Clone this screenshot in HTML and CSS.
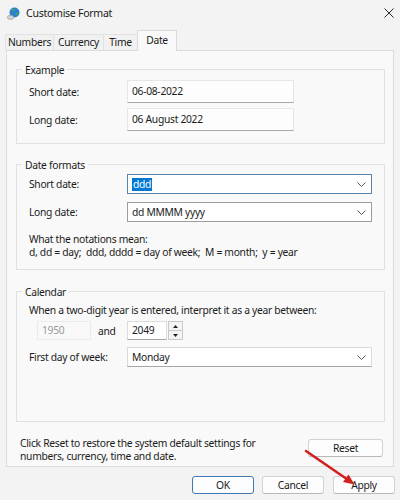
FILE: index.html
```html
<!DOCTYPE html>
<html>
<head>
<meta charset="utf-8">
<link rel="stylesheet" href="styles.css">
</head>
<body>
<div class="window">
  <div class="titlebar">
    <svg class="appicon" width="13" height="13" viewBox="0 0 13 13">
      <circle cx="7.5" cy="5.5" r="5" fill="#2c7fd3"/>
      <path d="M4.5 2.3 Q6.8 1.2 8 2.6 Q7.3 4.3 5.3 4 Z M8.5 5.5 Q10.8 5.4 11.3 7.2 Q10 8.8 8.6 7.8 Z" fill="#3fae3f"/>
      <ellipse cx="3.6" cy="10.3" rx="3.2" ry="2.1" fill="#d4d4d4" stroke="#8c8c8c" stroke-width="0.6"/>
    </svg>
    <span class="title">Customise Format</span>
    <svg class="close" width="10" height="10" viewBox="0 0 10 10">
      <path d="M0.5 0.5 L9.5 9.5 M9.5 0.5 L0.5 9.5" stroke="#2b2b2b" stroke-width="1"/>
    </svg>
  </div>
  <div class="tabs">
    <div class="tab t-num">Numbers</div>
    <div class="tab t-cur">Currency</div>
    <div class="tab t-time">Time</div>
    <div class="tab t-date active">Date</div>
  </div>
  <div class="panel">
    <div class="group g-example">
      <div class="legend">Example</div>
      <div class="row first">
        <span class="label">Short date:</span>
        <div class="field">06-08-2022</div>
      </div>
      <div class="row second">
        <span class="label">Long date:</span>
        <div class="field">06 August 2022</div>
      </div>
    </div>

    <div class="group g-formats">
      <div class="legend">Date formats</div>
      <div class="row c-first">
        <span class="label">Short date:</span>
        <div class="combo focused"><span class="sel">ddd</span>
          <svg class="chev" width="9" height="5" viewBox="0 0 9 5"><path d="M0.5 0.5 L4.5 4.5 L8.5 0.5" fill="none" stroke="#555" stroke-width="1"/></svg>
        </div>
      </div>
      <div class="row c-second">
        <span class="label">Long date:</span>
        <div class="combo">dd MMMM yyyy
          <svg class="chev" width="9" height="5" viewBox="0 0 9 5"><path d="M0.5 0.5 L4.5 4.5 L8.5 0.5" fill="none" stroke="#555" stroke-width="1"/></svg>
        </div>
      </div>
      <div class="notes">
        <div>What the notations mean:</div>
        <div>d, dd = day;&nbsp; ddd, dddd = day of week;&nbsp; M = month;&nbsp; y = year</div>
      </div>
    </div>

    <div class="group g-calendar">
      <div class="legend">Calendar</div>
      <div class="cal-text">When a two-digit year is entered, interpret it as a year between:</div>
      <div class="year-row">
        <div class="year disabled">1950</div>
        <span class="and">and</span>
        <div class="year active-year">2049</div>
        <div class="spinner">
          <div class="spin"><svg width="5" height="3" viewBox="0 0 5 3"><path d="M0 3 L2.5 0 L5 3 Z" fill="#222"/></svg></div>
          <div class="spin"><svg width="5" height="3" viewBox="0 0 5 3"><path d="M0 0 L2.5 3 L5 0 Z" fill="#222"/></svg></div>
        </div>
      </div>
      <div class="row c-week">
        <span class="label">First day of week:</span>
        <div class="combo light">Monday
          <svg class="chev" width="9" height="5" viewBox="0 0 9 5"><path d="M0.5 0.5 L4.5 4.5 L8.5 0.5" fill="none" stroke="#555" stroke-width="1"/></svg>
        </div>
      </div>
    </div>

    <div class="reset-area">
      <div class="reset-text">Click Reset to restore the system default settings for<br>numbers, currency, time and date.</div>
      <div class="btn reset">Reset</div>
    </div>
  </div>
  <div class="buttons">
    <div class="btn ok">OK</div>
    <div class="btn cancel">Cancel</div>
    <div class="btn apply">Apply</div>
  </div>
  <svg class="arrow" width="400" height="500" viewBox="0 0 400 500">
    <line x1="306" y1="451" x2="346" y2="478.5" stroke="#d21f1f" stroke-width="2.6" stroke-linecap="round"/>
    <polygon points="354.5,484.5 343,482 348.5,474.5" fill="#d21f1f"/>
  </svg>
</div>
</body>
</html>
```

FILE: styles.css
```css
* { box-sizing: border-box; }

body {
  margin: 0;
  font-family: "Noto Sans", "Open Sans", sans-serif;
  font-size: 10.3px;
  letter-spacing: -0.3px;
  color: #1b1b1b;
}

.window {
  width: 400px;
  height: 500px;
  background: #f3f3f3;
  position: relative;
  overflow: hidden;
  display: flex;
  flex-direction: column;
}

.titlebar {
  height: 30px;
  display: flex;
  align-items: center;
  padding: 0 0 4px 7px;
}

.title {
  margin-left: 6px;
  font-size: 10.6px;
  letter-spacing: -0.3px;
  color: #1a1a1a;
}

.close {
  margin-left: auto;
  margin-right: 6px;
}

.tabs {
  height: 20px;
  display: flex;
  align-items: flex-end;
  padding-left: 5px;
}

.tab {
  height: 16px;
  border: 1px solid #e2e2e2;
  border-bottom: none;
  background: #f1f1f1;
  text-align: center;
  line-height: 15px;
  margin-left: -1px;
  color: #1b1b1b;
}

.t-num { width: 49px; margin-left: 0; }
.t-cur { width: 51px; }
.t-time { width: 35px; }
.t-date { width: 40px; }

.tab.active {
  height: 21px;
  line-height: 18px;
  background: #f9f9f9;
  border-color: #dadada;
  margin-bottom: -1px;
  position: relative;
  z-index: 1;
}

.panel {
  margin: 0 6px;
  height: 417px;
  border: 1px solid #dcdcdc;
  background: #f9f9f9;
  padding: 18px 8px 0 9px;
}

.group {
  border: 1px solid #e1e1e1;
  padding: 0 12px;
}

.g-example { height: 75px; }
.g-formats { height: 106px; margin-top: 20px; }
.g-calendar { height: 131px; margin-top: 21px; }

.legend {
  display: table;
  margin: -7px 0 0 -7px;
  padding: 0 3px;
  background: #f9f9f9;
  line-height: 14px;
}

.row {
  display: flex;
  align-items: center;
}

.label {
  width: 98px;
}

.row.first { margin-top: 3px; }
.row.second { margin-top: 5px; }

.field {
  width: 167px;
  height: 23px;
  background: #fdfdfd;
  border: 1px solid #e6e6e6;
  border-bottom-color: #a9a9a9;
  padding-left: 4px;
  line-height: 21px;
}

.combo {
  width: 245px;
  height: 20px;
  background: #ffffff;
  border: 1px solid #9c9c9c;
  padding-left: 4px;
  display: flex;
  align-items: center;
}

.combo.focused {
  border-color: #5884b0;
}

.combo.light {
  border-color: #dadada;
  border-bottom-color: #a6a6a6;
}

.chev {
  margin-left: auto;
  margin-right: 5px;
}

.sel {
  background: #0078d4;
  color: #ffffff;
  padding: 0 1px;
  line-height: 13px;
}

.row.c-first { margin-top: 2px; }
.row.c-second { margin-top: 8px; }

.notes {
  margin-top: 11px;
  line-height: 13px;
}

.cal-text {
  margin-top: 4px;
  line-height: 14px;
}

.year-row {
  margin-top: 4px;
  display: flex;
  align-items: center;
  padding-left: 8px;
  height: 19px;
}

.year {
  height: 19px;
  line-height: 17px;
  padding-left: 4px;
}

.year.disabled {
  width: 54px;
  background: #f9f9f9;
  border: 1px solid #ebebeb;
  color: #9a9a9a;
}

.and {
  width: 36px;
  padding-left: 7px;
}

.year.active-year {
  width: 40px;
  background: #ffffff;
  border: 1px solid #dcdcdc;
  border-bottom-color: #a6a6a6;
}

.spinner {
  width: 15px;
  height: 19px;
  display: flex;
  flex-direction: column;
  margin-left: 1px;
}

.spin {
  flex: 1;
  border: 1px solid #c9c9c9;
  background: #f4f4f4;
  display: flex;
  align-items: center;
  justify-content: center;
}

.spin + .spin { margin-top: -1px; }

.row.c-week { margin-top: 7px; }

.reset-area {
  margin-top: 15px;
  display: flex;
  align-items: flex-start;
  padding-left: 4px;
}

.reset-text {
  line-height: 13px;
}

.btn {
  height: 18px;
  background: #fdfdfd;
  border: 1px solid #d3d3d3;
  border-bottom-color: #b8b8b8;
  border-radius: 3px;
  text-align: center;
  line-height: 16px;
  color: #1b1b1b;
}

.reset {
  width: 75px;
  margin-left: auto;
  margin-right: 2px;
  margin-top: 2px;
}

.buttons {
  margin-top: 9px;
  display: flex;
  justify-content: flex-end;
  padding-right: 5px;
}

.ok { width: 62px; border-color: #3f7ab5; }
.cancel { width: 62px; margin-left: 8px; }
.apply { width: 62px; margin-left: 9px; }

.arrow {
  position: absolute;
  left: 0;
  top: 0;
  pointer-events: none;
}
```
